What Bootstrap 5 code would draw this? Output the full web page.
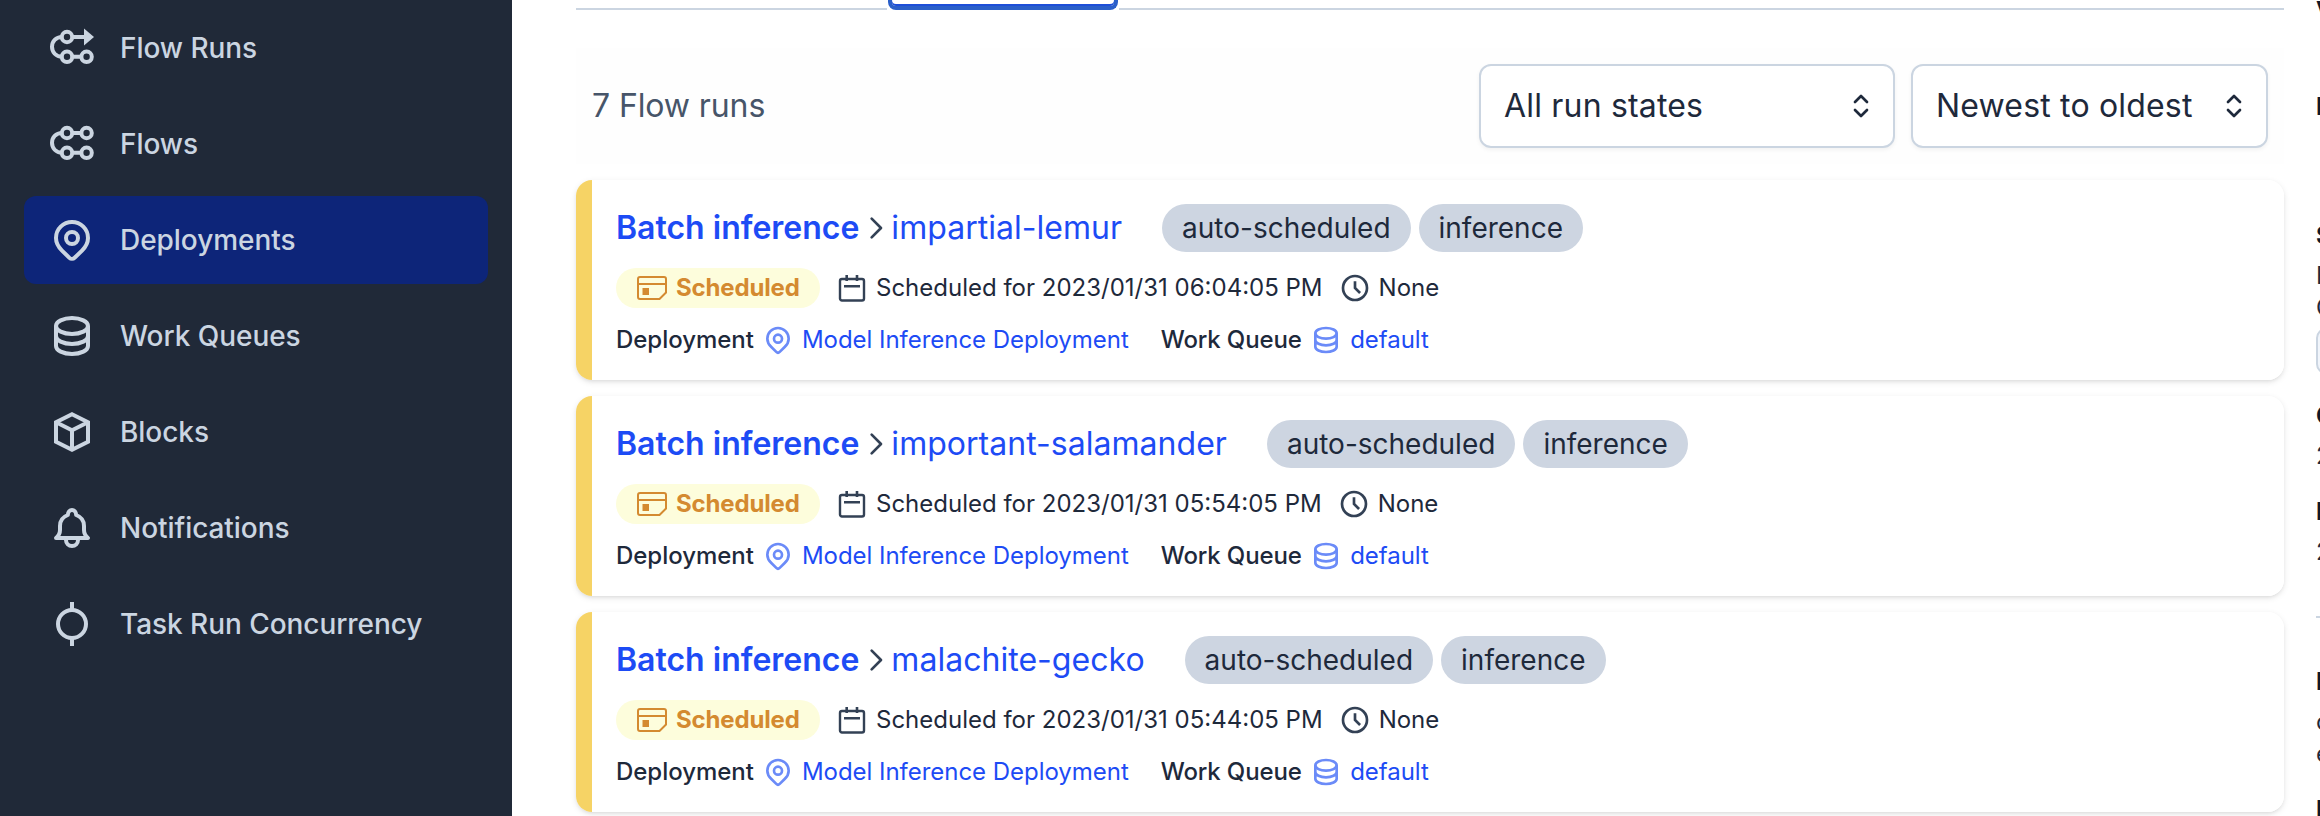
<!DOCTYPE html>
<html lang="en">
<head>
<meta charset="utf-8">
<title>Deployments</title>
<link href="https://cdn.jsdelivr.net/npm/bootstrap@5.3.0/dist/css/bootstrap.min.css" rel="stylesheet">
<script src="https://cdn.jsdelivr.net/npm/bootstrap@5.3.0/dist/js/bootstrap.bundle.min.js"></script>
<style>
  body { font-family: Inter, sans-serif; color: #1e293b; background: #fff; height: 816px; overflow: hidden; }
  svg { display: block; flex: none; fill: none; stroke: currentColor; stroke-width: 2; }
  a { text-decoration: none; }
  .i32 { width: 32px; height: 32px; }
  .i48 { width: 48px; height: 48px; }
  .side { width: 512px; height: 816px; background: #202938; padding: 4px 24px; gap: 8px; }
  .side .nav-link { height: 88px; padding: 0 24px; gap: 24px; font-size: 28px; font-weight: 500; letter-spacing: -.05px; color: #cbd5e1; border-radius: 12px; }
  .side .nav-link.active { background: #0d2579; }
  .main-col { width: 1708px; margin-left: 64px; }
  .tabs { height: 10px; background: linear-gradient(#fff 8px, #cbd5e1 8px); }
  .tab-focus { width: 232px; height: 10px; margin-left: 311px; background: #fff; padding: 0 1px; }
  .tab-ring { height: 10px; border: 4px solid #2a5fc9; border-top: 0; border-radius: 0 0 8px 8px; box-shadow: inset 0 -2px #1d4ed8; }
  .tools { height: 116px; margin-top: 38px; padding: 16px; background: #fefefe; font-size: 32px; }
  .count { color: #475569; letter-spacing: -.1px; }
  .picker { height: 84px; border: 2px solid #cbd5e1; border-radius: 12px; background: #fff; padding: 0 16px 0 23px; letter-spacing: .18px; box-shadow: 0 2px 4px rgba(0,0,0,.05); }
  .picker-state { width: 416px; }
  .picker-sort { width: 357px; }
  .runs { margin-top: 16px; gap: 16px; }
  .run { height: 200px; flex: none; border-radius: 16px; background: linear-gradient(to right, #f6d365 16px, #fff 16px); padding: 24px 24px 24px 40px; gap: 16px; box-shadow: 0 2px 6px rgba(0,0,0,.1), 0 2px 4px -2px rgba(0,0,0,.1); font-size: 24px; line-height: 32px; }
  .run a { color: #1d4bf5; }
  .run-title { height: 48px; font-size: 32px; }
  .run-name { margin-right: 40px; letter-spacing: .03px; }
  .tag { height: 48px; border-radius: 24px; padding: 0 20px; background: #cdd5e1; font-size: 28px; line-height: 48px; }
  .state { width: 204px; height: 40px; border-radius: 20px; padding: 0 20px; background: #fdfddc; color: #d48a30; font-weight: 700; letter-spacing: -.15px; }
  .slate { color: #334155; }
  .pale { color: #6b8bf8; }
  .links { letter-spacing: -.03px; }
  .label { font-weight: 500; }
  .queue { margin-left: 24px; margin-right: .5px; letter-spacing: -.15px; }
  .info { width: 4px; margin-left: 32px; font-size: 24px; line-height: 32px; margin-top: -5px; }
  .info b { font-weight: 700; color: #0f172a; }
  .info-btn { width: 60px; height: 46px; flex: none; border: 2px solid #cbd5e1; border-radius: 10px; background: #f1f5fb; margin: 4px 0 26px; }
  .info-line { height: 2px; flex: none; background: #cbd5e1; margin: 48px 0; }
  .g8 { margin-top: 8px; }
  .g24 { margin-top: 24px; }
  .g64 { margin-top: 64px; }
  .g97 { margin-top: 97px; }
</style>
</head>
<body class="d-flex">
<svg width="0" height="0" class="position-absolute">
  <symbol id="pin" viewBox="0 0 24 24"><path d="M4 11a8 8 0 0 1 16 0c0 2.700-1.300 4.600-3 6.300l-3.700 3.600a1.850 1.850 0 0 1-2.600 0L7 17.300C5.300 15.600 4 13.700 4 11z"/><circle cx="12" cy="11" r="3"/></symbol>
  <symbol id="db" viewBox="0 0 24 24"><ellipse cx="12" cy="7" rx="8" ry="4"/><path d="M4 7v10c0 2.200 3.600 4 8 4s8-1.800 8-4V7M4 12c0 2.200 3.600 4 8 4s8-1.800 8-4"/></symbol>
  <symbol id="chev" viewBox="0 0 24 24"><path stroke-linecap="round" stroke-linejoin="round" d="M9.500 5l7 7-7 7"/></symbol>
  <symbol id="sched" viewBox="0 0 32 32"><path d="M4 5h24a2 2 0 0 1 2 2v13.500L23.500 27H4a2 2 0 0 1-2-2V7a2 2 0 0 1 2-2zM2 12h28"/><path fill="currentColor" stroke="none" d="M6.500 16H13v7H6.500z"/></symbol>
  <symbol id="cal" viewBox="0 0 32 32"><rect x="4" y="7" width="24" height="21.500" rx="2" stroke-width="2.400"/><path stroke-width="2.600" d="M10.700 3v6M21 3v6M8 14.300h16"/></symbol>
  <symbol id="clock" viewBox="0 0 24 24"><circle cx="12" cy="12" r="9"/><path d="M12 7v5l3.800 3.800"/></symbol>
  <symbol id="sort" viewBox="0 0 32 32"><path stroke-width="2.700" stroke-linecap="round" stroke-linejoin="round" d="M10 12l6-6 6 6M10 20l6 6 6-6"/></symbol>
</svg>

<nav class="side nav flex-column flex-nowrap flex-shrink-0">
  <a class="nav-link d-flex align-items-center" href="#"><svg class="i48" viewBox="0 0 24 24"><circle cx="9.500" cy="6.500" r="2.600"/><circle cx="9.500" cy="16.400" r="2.600"/><circle cx="19.300" cy="16.400" r="2.600"/><path d="M7 6.500C3.900 6.500 2 8.800 2 11.400s1.900 5 5 5M12 6.500h7M12 16.400h4.700"/><path fill="currentColor" stroke="none" d="M18 2.300l5 4.200-5 4.200z"/></svg>Flow Runs</a>
  <a class="nav-link d-flex align-items-center" href="#"><svg class="i48" viewBox="0 0 24 24"><circle cx="9.500" cy="6.500" r="2.600"/><circle cx="19.300" cy="6.500" r="2.600"/><circle cx="9.500" cy="16.400" r="2.600"/><circle cx="19.300" cy="16.400" r="2.600"/><path d="M7 6.500C3.900 6.500 2 8.800 2 11.400s1.900 5 5 5M12 6.500h4.700M12 16.400h4.700"/></svg>Flows</a>
  <a class="nav-link active d-flex align-items-center" href="#"><svg class="i48"><use href="#pin"/></svg>Deployments</a>
  <a class="nav-link d-flex align-items-center" href="#"><svg class="i48"><use href="#db"/></svg>Work Queues</a>
  <a class="nav-link d-flex align-items-center" href="#"><svg class="i48" viewBox="0 0 24 24"><path d="M12 3.100l8 4v9.800l-8 4-8-4V7.100zM4 7.100l8 4 8-4M12 11v10"/></svg>Blocks</a>
  <a class="nav-link d-flex align-items-center" href="#"><svg class="i48" viewBox="0 0 24 24" stroke-linejoin="round"><path d="M6 11c0-2.700 1.500-4.600 3.900-5.500C10 4 10.900 3 12 3s2 1 2.100 2.500C16.500 6.400 18 8.300 18 11v2c0 1.800.500 2.800 2 4H4c1.500-1.200 2-2.200 2-4zM9 18a3 3 0 0 0 6 0"/></svg>Notifications</a>
  <a class="nav-link d-flex align-items-center" href="#"><svg class="i48" viewBox="0 0 24 24"><circle cx="12" cy="12" r="7"/><path d="M12 1v4M12 19v4"/></svg>Task Run Concurrency</a>
</nav>

<main class="main-col flex-shrink-0">
  <div class="tabs"><div class="tab-focus"><div class="tab-ring"></div></div></div>
  <div class="tools d-flex align-items-center gap-3">
    <span class="count me-auto">7 Flow runs</span>
    <div class="picker picker-state d-flex align-items-center justify-content-between"><span>All run states</span><svg class="i32"><use href="#sort"/></svg></div>
    <div class="picker picker-sort d-flex align-items-center justify-content-between"><span>Newest to oldest</span><svg class="i32"><use href="#sort"/></svg></div>
  </div>
  <div class="runs d-flex flex-column">
    <article class="run d-flex flex-column">
      <div class="run-title d-flex align-items-center"><a class="fw-semibold" href="#">Batch inference</a><svg class="i32 slate"><use href="#chev"/></svg><a class="run-name" href="#">impartial-lemur</a><span class="tag me-2">auto-scheduled</span><span class="tag">inference</span></div>
      <div class="d-flex align-items-center gap-3"><span class="state d-flex align-items-center gap-2"><svg class="i32"><use href="#sched"/></svg>Scheduled</span><span class="d-flex gap-2"><svg class="i32 slate"><use href="#cal"/></svg>Scheduled for 2023/01/31 06:04:05 PM</span><span class="d-flex gap-2"><svg class="i32 slate"><use href="#clock"/></svg>None</span></div>
      <div class="links d-flex gap-2"><span class="label">Deployment</span><svg class="i32 pale"><use href="#pin"/></svg><a href="#">Model Inference Deployment</a><span class="label queue">Work Queue</span><svg class="i32 pale"><use href="#db"/></svg><a href="#">default</a></div>
    </article>
    <article class="run d-flex flex-column">
      <div class="run-title d-flex align-items-center"><a class="fw-semibold" href="#">Batch inference</a><svg class="i32 slate"><use href="#chev"/></svg><a class="run-name" href="#">important-salamander</a><span class="tag me-2">auto-scheduled</span><span class="tag">inference</span></div>
      <div class="d-flex align-items-center gap-3"><span class="state d-flex align-items-center gap-2"><svg class="i32"><use href="#sched"/></svg>Scheduled</span><span class="d-flex gap-2"><svg class="i32 slate"><use href="#cal"/></svg>Scheduled for 2023/01/31 05:54:05 PM</span><span class="d-flex gap-2"><svg class="i32 slate"><use href="#clock"/></svg>None</span></div>
      <div class="links d-flex gap-2"><span class="label">Deployment</span><svg class="i32 pale"><use href="#pin"/></svg><a href="#">Model Inference Deployment</a><span class="label queue">Work Queue</span><svg class="i32 pale"><use href="#db"/></svg><a href="#">default</a></div>
    </article>
    <article class="run d-flex flex-column">
      <div class="run-title d-flex align-items-center"><a class="fw-semibold" href="#">Batch inference</a><svg class="i32 slate"><use href="#chev"/></svg><a class="run-name" href="#">malachite-gecko</a><span class="tag me-2">auto-scheduled</span><span class="tag">inference</span></div>
      <div class="d-flex align-items-center gap-3"><span class="state d-flex align-items-center gap-2"><svg class="i32"><use href="#sched"/></svg>Scheduled</span><span class="d-flex gap-2"><svg class="i32 slate"><use href="#cal"/></svg>Scheduled for 2023/01/31 05:44:05 PM</span><span class="d-flex gap-2"><svg class="i32 slate"><use href="#clock"/></svg>None</span></div>
      <div class="links d-flex gap-2"><span class="label">Deployment</span><svg class="i32 pale"><use href="#pin"/></svg><a href="#">Model Inference Deployment</a><span class="label queue">Work Queue</span><svg class="i32 pale"><use href="#db"/></svg><a href="#">default</a></div>
    </article>
  </div>
</main>

<aside class="info d-flex flex-column flex-shrink-0">
  <b>V</b>
  <b class="g64">P</b>
  <b class="g97">S</b>
  <span class="g8">E</span>
  <span>C</span>
  <div class="info-btn"></div>
  <b>C</b>
  <span class="g8">2</span>
  <b class="g24">L</b>
  <span class="g8">2</span>
  <div class="info-line"></div>
  <b>F</b>
  <span class="g8">c</span>
  <span>e</span>
  <b class="g24">P</b>
</aside>
</body>
</html>
